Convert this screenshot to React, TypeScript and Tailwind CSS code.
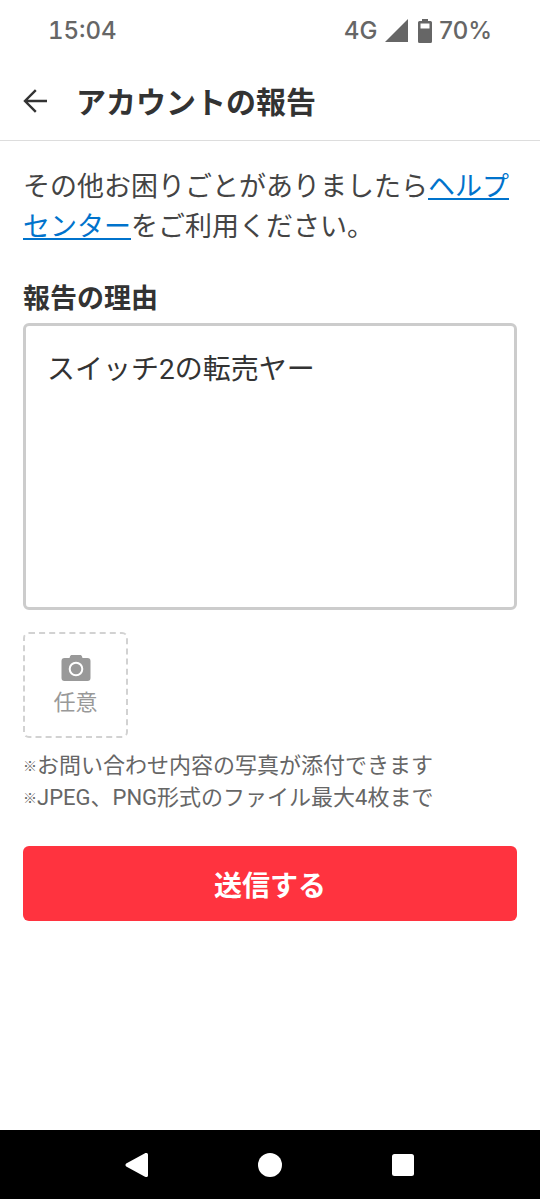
import React, { useState } from "react";

const notes = ["お問い合わせ内容の写真が添付できます", "JPEG、PNG形式のファイル最大4枚まで"];

const StatusBar = () => (
  <div className="h-[62px] pl-12 pr-12 flex items-center justify-between font-['Inter',sans-serif] font-medium text-2xl text-[#666666]">
    <span className="tabular-nums">15:04</span>
    <div className="flex items-center">
      <span>4G</span>
      <svg className="ml-2 w-6 h-6" viewBox="0 0 24 24" fill="currentColor" aria-hidden="true">
        <path d="M23 0v23H0z" />
      </svg>
      <svg className="ml-2 mr-1.5 w-4 h-6" viewBox="0 0 16 24" aria-hidden="true">
        <path
          d="M5 0h6v2h2.5A1.5 1.5 0 0 1 15 3.500v19a1.500 1.500 0 0 1-1.500 1.500h-11A1.500 1.500 0 0 1 1 22.500v-19A1.500 1.500 0 0 1 2.500 2H5zM3.500 4.500v5h9v-5z"
          fill="currentColor"
          fillRule="evenodd"
        />
      </svg>
      <span>70%</span>
    </div>
  </div>
);

const Header = () => (
  <header className="h-[79px] pl-[23px] flex items-center gap-[29px] border-b border-[#dddddd]">
    <button type="button" aria-label="戻る" className="text-[#333333]">
      <svg className="w-6 h-6" viewBox="0 0 24 24" fill="none" stroke="currentColor" strokeWidth="2.4" aria-hidden="true">
        <path d="M12.800 1.200 2 12l10.800 10.800M2 12h22" />
      </svg>
    </button>
    <h1 className="pt-1 text-[30px] leading-10 font-bold text-[#333333]">アカウントの報告</h1>
  </header>
);

const NavigationBar = () => (
  <nav className="h-[69px] bg-black text-white flex items-center justify-center gap-[109px]">
    <button type="button" aria-label="戻る">
      <svg className="w-6 h-6" viewBox="0 0 24 24" fill="currentColor" aria-hidden="true">
        <path d="M1.200 10.600 20 .2c1.600-.8 3 0 3 1.600v20.400c0 1.600-1.400 2.400-3 1.600L1.200 13.400c-1-.7-1-2.100 0-2.800z" />
      </svg>
    </button>
    <button type="button" aria-label="ホーム">
      <svg className="w-6 h-6" viewBox="0 0 24 24" fill="currentColor" aria-hidden="true">
        <circle cx="12" cy="12" r="12" />
      </svg>
    </button>
    <button type="button" aria-label="アプリ履歴">
      <svg className="w-6 h-6" viewBox="0 0 24 24" fill="currentColor" aria-hidden="true">
        <rect x="1" y="1" width="22" height="22" rx="2.500" />
      </svg>
    </button>
  </nav>
);

const ReportForm = () => {
  const [reason, setReason] = useState("スイッチ2の転売ヤー");

  const handleSubmit = (e: React.FormEvent) => {
    e.preventDefault();
  };

  return (
    <form onSubmit={handleSubmit} className="mt-8 flex flex-col items-start">
      <label htmlFor="reason" className="text-[27px] leading-10 font-bold text-[#333333]">
        報告の理由
      </label>
      <textarea
        id="reason"
        name="reason"
        value={reason}
        onChange={(e) => setReason(e.target.value)}
        className="mt-1 w-full h-[287px] px-[21px] py-6 border-3 border-[#cccccc] rounded-md resize-none text-[28px] leading-10 text-[#333333] focus:outline-none"
      />

      <button
        type="button"
        className="mt-[22px] w-[105px] h-[106px] pt-1 flex flex-col items-center justify-center border-2 border-dashed border-[#d2d2d2] rounded-md text-[#999999]"
      >
        <svg className="w-[30px] h-[26px]" viewBox="0 0 30 26" aria-hidden="true">
          <path
            d="M9 1.500C9.300.5 10 0 11 0h8c1 0 1.700.5 2 1.500l.5 1.500H26.500a3 3 0 0 1 3 3v17a3 3 0 0 1-3 3h-23a3 3 0 0 1-3-3V6a3 3 0 0 1 3-3h5z"
            fill="currentColor"
          />
          <circle cx="15" cy="14" r="6.300" fill="none" stroke="white" strokeWidth="2" />
        </svg>
        <span className="mt-1 pt-0.5 text-[22px] leading-8">任意</span>
      </button>

      <ul className="mt-3 text-[22px] leading-8 text-[#666666]">
        {notes.map((note) => (
          <li key={note} className="flex">
            <span className="text-sm leading-8 font-bold">※</span>
            {note}
          </li>
        ))}
      </ul>

      <button type="submit" className="mt-8 w-full h-[75px] pt-1.5 rounded-md bg-[#ff333f] text-[28px] leading-10 font-bold text-white">
        送信する
      </button>
    </form>
  );
};

const App = () => {
  return (
    <div lang="ja" className="min-h-screen flex flex-col bg-white font-['Roboto','Noto_Sans_CJK_JP',sans-serif]">
      <StatusBar />
      <Header />
      <main className="flex-1 px-[23px] pt-[26px]">
        <p className="text-[27px] leading-10 text-[#444444]">
          その他お困りごとがありましたら
          <a href="#help" className="text-[#0073cc] underline decoration-2 underline-offset-2">
            ヘルプセンター
          </a>
          をご利用ください。
        </p>
        <ReportForm />
      </main>
      <NavigationBar />
    </div>
  );
};

export default App;
